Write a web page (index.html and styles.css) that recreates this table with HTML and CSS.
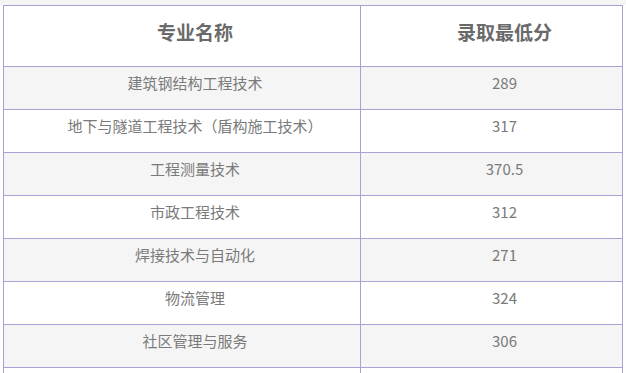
FILE: index.html
```html
<!DOCTYPE html>
<html lang="zh-CN">
<head>
<meta charset="utf-8">
<title>录取最低分</title>
<link rel="stylesheet" href="styles.css">
</head>
<body>
<div class="prev-row"></div>
<div class="table">
  <div class="cell head">专业名称</div>
  <div class="cell head">录取最低分</div>

  <div class="cell alt">建筑钢结构工程技术</div>
  <div class="cell alt">289</div>

  <div class="cell">地下与隧道工程技术（盾构施工技术）</div>
  <div class="cell">317</div>

  <div class="cell alt">工程测量技术</div>
  <div class="cell alt">370.5</div>

  <div class="cell">市政工程技术</div>
  <div class="cell">312</div>

  <div class="cell alt">焊接技术与自动化</div>
  <div class="cell alt">271</div>

  <div class="cell">物流管理</div>
  <div class="cell">324</div>

  <div class="cell alt">社区管理与服务</div>
  <div class="cell alt">306</div>

  <div class="cell"></div>
  <div class="cell"></div>
</div>
</body>
</html>
```

FILE: styles.css
```css
html, body {
  margin: 0;
  padding: 0;
  background: #ffffff;
  overflow: hidden;
}

body {
  font-family: "Noto Sans CJK SC", "Noto Sans", sans-serif;
  color: #7a7a7a;
  text-spacing-trim: space-all;
}

.prev-row {
  height: 5px;
  background: #f5f5f5;
}

.table {
  margin-left: 3px;
  width: 620px;
  box-sizing: border-box;
  display: grid;
  grid-template-columns: 357px 262px;
  border-left: 1px solid #aaa2d4;
  border-top: 1px solid #aaa2d4;
}

.cell {
  box-sizing: border-box;
  height: 43px;
  padding: 5px 0 0 26px;
  border-right: 1px solid #aaa2d4;
  border-bottom: 1px solid #aaa2d4;
  font-size: 15px;
  line-height: 22px;
  text-align: center;
  white-space: nowrap;
}

.cell.alt {
  background: #f5f5f5;
}

.cell.head {
  height: 61px;
  padding-top: 14px;
  font-size: 19px;
  line-height: 24px;
  font-weight: bold;
  color: #6a6a6a;
}
```
